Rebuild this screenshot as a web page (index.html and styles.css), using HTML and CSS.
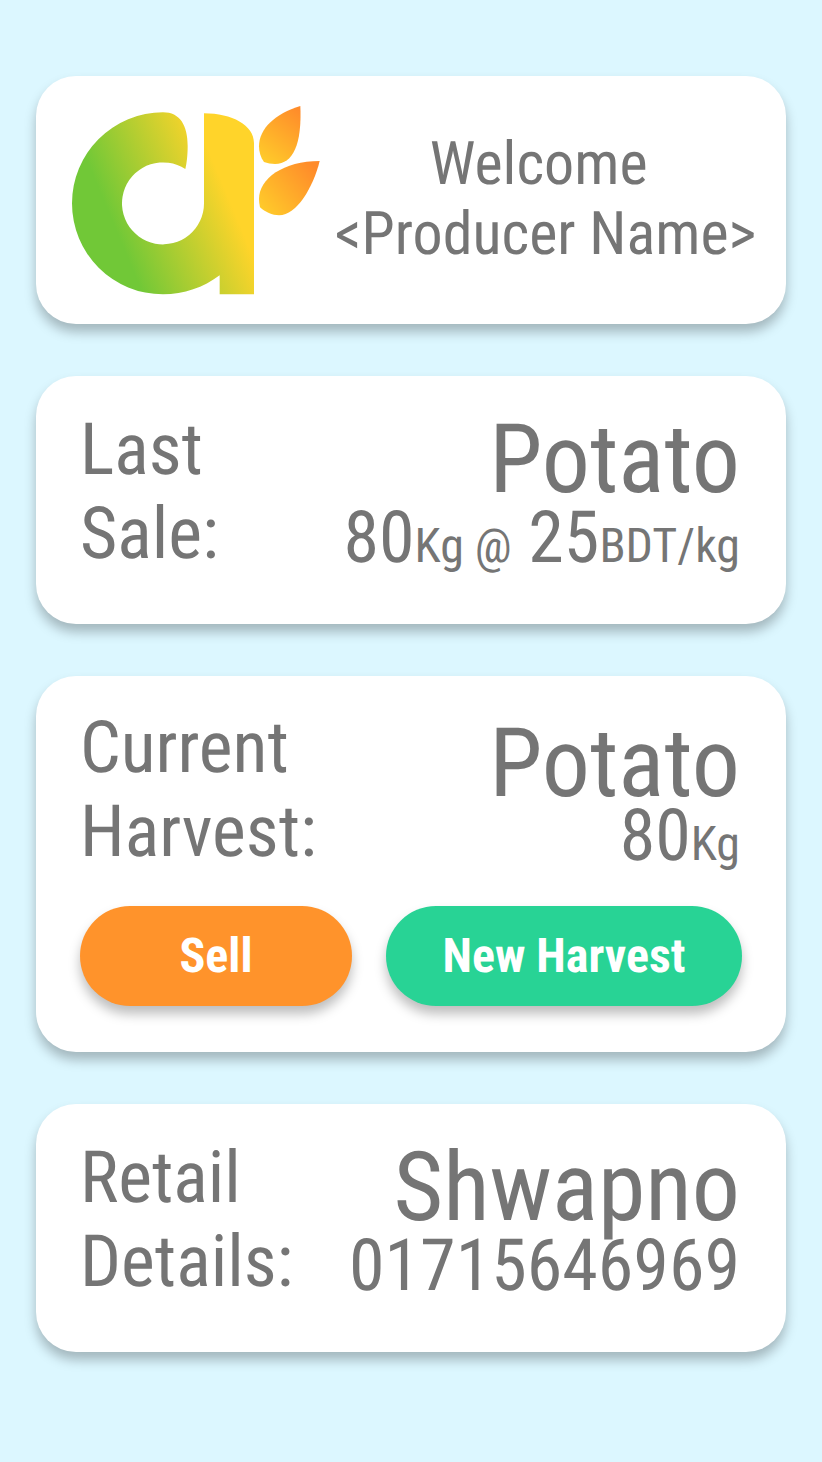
FILE: index.html
```html
<!DOCTYPE html>
<html lang="en">
<head>
<meta charset="utf-8">
<title>Producer dashboard</title>
<link rel="stylesheet" href="styles.css">
</head>
<body>
<main class="page">
  <header class="card welcome">
    <svg class="logo" viewBox="126 107 744 567" aria-label="Logo">
      <defs>
        <linearGradient id="body" gradientUnits="userSpaceOnUse" x1="250" y1="460" x2="572" y2="325">
          <stop offset="0" stop-color="#71c837"/><stop offset="1" stop-color="#ffd42a"/>
        </linearGradient>
        <linearGradient id="leafA" gradientUnits="userSpaceOnUse" x1="695" y1="265" x2="811" y2="115">
          <stop offset="0" stop-color="#ffca2a"/><stop offset="1" stop-color="#ff8a2a"/>
        </linearGradient>
        <linearGradient id="leafB" gradientUnits="userSpaceOnUse" x1="695" y1="415" x2="850" y2="285">
          <stop offset="0" stop-color="#ffca2a"/><stop offset="1" stop-color="#ff8a2a"/>
        </linearGradient>
      </defs>
      <path fill="url(#body)" d="M399 126C450 126 473 165 473 227C473 255 470 280 466 296A123 123 0 1 0 522 399V129C606 129 672 165 672 218V672H569V615C520 652 462 672 399 672A273 273 0 0 1 399 126Z"/>
      <path fill="url(#leafA)" d="M811 107C735 130 687 175 687 228C687 245 692 262 702 275C712 279 724 281 735 281C790 281 816 220 811 107Z"/>
      <path fill="url(#leafB)" d="M869 272C760 272 687 325 687 386Q687 398 690 411C705 425 727 435 747 435C800 435 850 350 869 272Z"/>
    </svg>
    <h1 class="greeting">Welcome&nbsp;<br>&lt;Producer Name&gt;</h1>
  </header>

  <section class="card sale">
    <div class="row">
      <h2 class="label">Last<br>Sale:</h2>
      <div class="value">
        <p class="name">Potato</p>
        <p class="amount">80<small>Kg @</small> 25<small>BDT/kg</small></p>
      </div>
    </div>
  </section>

  <section class="card harvest">
    <div class="row">
      <h2 class="label">Current<br>Harvest:</h2>
      <div class="value">
        <p class="name">Potato</p>
        <p class="amount">80<small>Kg</small></p>
      </div>
    </div>
    <div class="actions">
      <button class="btn sell">Sell</button>
      <button class="btn new">New Harvest</button>
    </div>
  </section>

  <section class="card retail">
    <div class="row">
      <h2 class="label">Retail<br>Details:</h2>
      <div class="value">
        <p class="name">Shwapno</p>
        <p class="amount">01715646969</p>
      </div>
    </div>
  </section>
</main>
</body>
</html>
```
FILE: styles.css
```css
* { box-sizing: border-box; margin: 0; padding: 0; }
body {
  background: #dcf7ff;
  color: #757575;
  font-family: "Roboto Condensed", Roboto, sans-serif;
  font-stretch: condensed;
  text-rendering: geometricPrecision;
}
.page {
  width: 822px;
  height: 1462px;
  padding: 76px 36px 0;
  display: flex;
  flex-direction: column;
  gap: 52px;
}
.card {
  height: 248px;
  padding: 32px 46px 0 44px;
  border-radius: 40px;
  background: #fff;
  box-shadow: 0 8px 12px rgba(0, 0, 0, 0.26);
}
.welcome { display: flex; padding: 30px 0 0 36px; }
.logo { width: 248px; height: 189px; flex: none; }
.greeting {
  width: 451px;
  padding-top: 23px;
  font-size: 60px;
  line-height: 70px;
  font-weight: 400;
  text-align: center;
  white-space: nowrap;
}
.row { display: flex; justify-content: space-between; height: 168px; white-space: nowrap; }
.label { font-size: 72px; line-height: 84px; font-weight: 400; }
.value { text-align: right; padding-top: 8px; }
.name { font-size: 96px; line-height: 88px; }
.amount { padding-top: 4px; font-size: 72px; line-height: 60px; }
.amount small { font-size: 48px; line-height: 1; }
.harvest { height: 376px; padding-top: 30px; }
.harvest .value { padding-top: 14px; }
.harvest .name { height: 86px; }
.harvest .amount { padding-top: 0; }
.actions { display: flex; gap: 34px; margin-top: 32px; width: 662px; }
.btn {
  height: 100px;
  padding-bottom: 2px;
  border: 0;
  border-radius: 50px;
  color: #fff;
  font: inherit;
  font-size: 48px;
  font-weight: 700;
  text-rendering: inherit;
  box-shadow: 0 8px 12px rgba(0, 0, 0, 0.26);
}
.sell { width: 272px; background: #ff932b; }
.new { width: 356px; background: #28d395; }
```
